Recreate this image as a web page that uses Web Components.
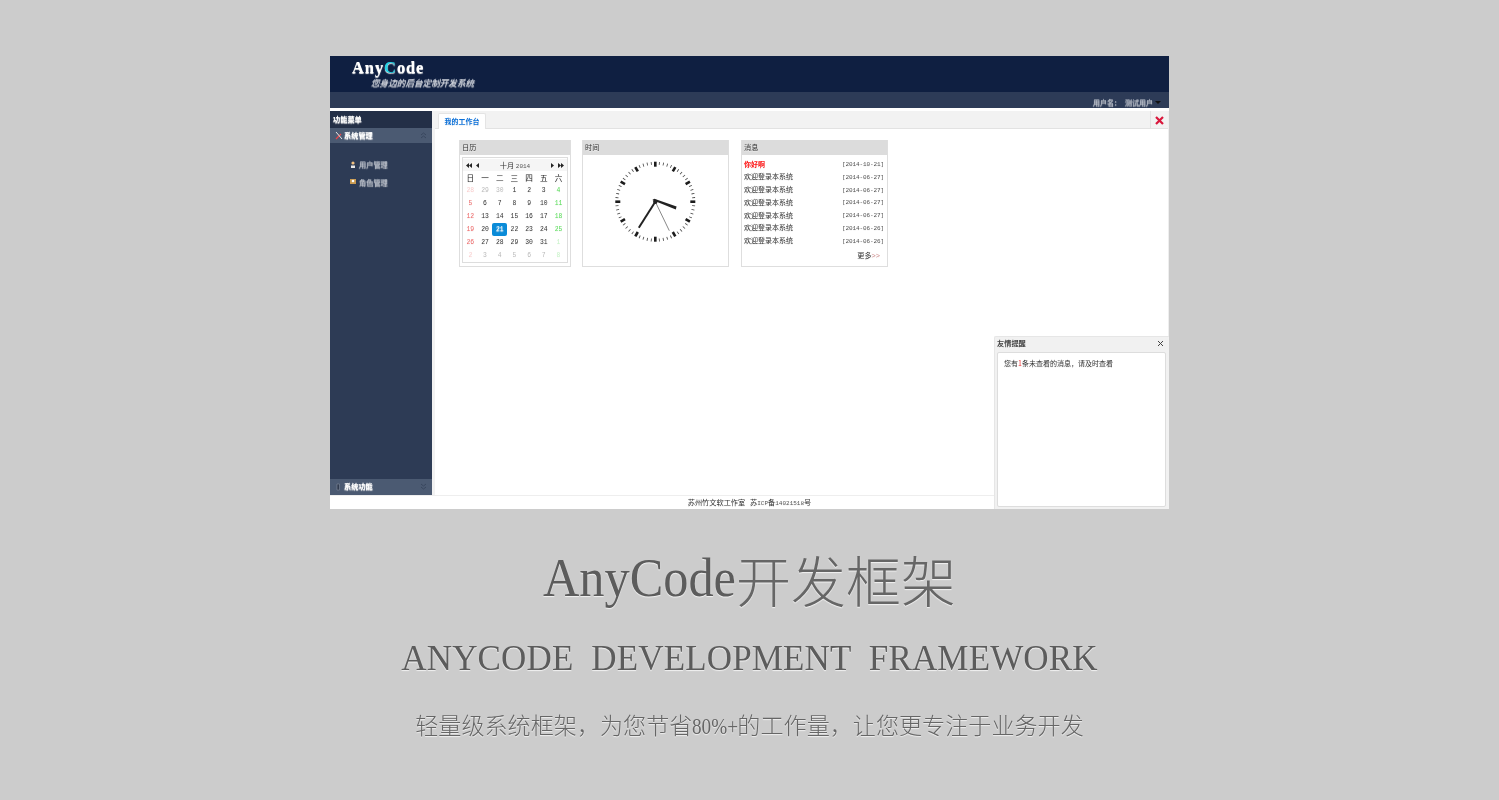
<!DOCTYPE html>
<html lang="zh"><head><meta charset="utf-8"><title>AnyCode</title>
<style>html,body{margin:0;background:#ccc;font-family:"Liberation Sans","Noto Sans CJK SC",sans-serif}</style></head>
<body><ac-page></ac-page>
<script>
const CJK='"Noto Sans CJK SC"';
function def(name,css,html,init){customElements.define(name,class extends HTMLElement{constructor(){super();const r=this.attachShadow({mode:'open'});r.innerHTML='<style>'+css+'</style>'+(typeof html==='function'?html(this):html);}connectedCallback(){if(init)init(this);}});}

def('ac-header',`:host{display:block;flex:none}
.top{height:36px;background:#0f1f41;position:relative;display:flex;flex-direction:column;padding-left:22px;box-sizing:border-box}
.logo{font:bold 16.5px/16px "Liberation Serif",serif;letter-spacing:.9px;color:#fff;margin-top:4px}
.logo b{color:#25d3e6}
.sub{font:italic 8.6px/10px ${CJK},sans-serif;color:#c9ced8;margin:1px 0 0 19px}
.bar{height:16px;background:#2d3b57;display:flex;justify-content:flex-end;align-items:center;gap:4px;padding:5px 8px 0 0;font:7px/11px ${CJK},sans-serif;color:#aeb5c2;box-sizing:border-box}
.bar i{width:0;height:0;border:3px solid transparent;border-top:3px solid #111;border-bottom:0;margin-left:-2px}
.line{height:3px;background:#fff}`,
`<div class="top"><div class="logo">Any<b>C</b>ode</div><div class="sub">您身边的后台定制开发系统</div></div>
<div class="bar"><span>用户名：</span><span>测试用户</span><i></i></div><div class="line"></div>`);

def('ac-menu-head',`:host{display:flex;align-items:center;height:16px;background:#4b5a72;color:#fff;font:bold 7.2px/14px ${CJK},sans-serif;padding:0 5px 2px 5px;gap:1px;flex:none;box-sizing:border-box}
:host([open]){height:15px;padding-bottom:1px}
svg{width:8px;height:9px;flex:none}span{flex:1}.c{width:7px;height:7px;flex:none;opacity:.4}`,
h=>`<svg viewBox="0 0 8 9">${h.getAttribute('open')!==null?'<path d="M1 8 6 3" stroke="#e8454a" stroke-width="1.2"/><path d="M1 1l6 7" stroke="#e8e8e8"/>':'<path d="M2 2h2.5v6H2z" fill="#2f3a4e" stroke="#8c95a5" stroke-width=".5"/>'}</svg><span><slot></slot></span>
<svg class="c" viewBox="0 0 7 7"><path d="${h.getAttribute('open')!==null?'M1 3 3.5 1 6 3M1 6 3.5 4 6 6':'M1 1 3.5 3 6 1M1 4 3.5 6 6 4'}" stroke="#1f2a40" fill="none"/></svg>`);

def('ac-sidebar',`:host{width:102px;flex:none;background:#2d3b55;display:flex;flex-direction:column}
.t{height:17px;background:#232f47;color:#fff;font:bold 7.2px/16px ${CJK},sans-serif;padding-left:3px;flex:none}
.list{flex:1;padding:14px 0 0 20px;display:flex;flex-direction:column;gap:3px}
.i{height:14.5px;display:flex;align-items:center;gap:3px;color:#a9b0bd;font:7.2px/14px ${CJK},sans-serif}
.i svg{width:6px;height:7px}`,
`<div class="t">功能菜单</div><ac-menu-head open>系统管理</ac-menu-head>
<div class="list"><div class="i"><svg viewBox="0 0 6 7"><circle cx="3" cy="2" r="1.6" fill="#f0c080"/><path d="M1 7V4.5h4V7z" fill="#e8e8e8"/></svg>用户管理</div>
<div class="i"><svg viewBox="0 0 6 7"><rect y="1" width="6" height="5" fill="#c99a50"/><circle cx="3" cy="3" r="1.3" fill="#fff"/></svg>角色管理</div></div>
<ac-menu-head>系统功能</ac-menu-head>`);

def('ac-panel',`:host{display:flex;flex-direction:column;flex:none;width:145px;height:126px;border:1px solid #dedede;border-top:0;background:#fff}
.h{height:15px;background:#dcdcdc;font:7.2px/15px ${CJK},sans-serif;color:#333;padding-left:2px;flex:none}
.b{flex:1;min-height:0}`,
h=>`<div class="h">${h.getAttribute('title')}</div><div class="b"><slot></slot></div>`);

def('ac-calendar',`:host{display:block;margin:2px 2px 0;border:1px solid #ddd;height:106px;box-sizing:border-box;padding:1px 0 1px 0}
.tb{display:flex;align-items:center;height:12px;background:#f5f5f5;font:7.2px/12px ${CJK},sans-serif;color:#333;padding:0 3px;gap:4px}
.tb svg{height:5px;flex:none}.m{flex:1;text-align:center}.m small{font:6px "Liberation Mono",monospace;color:#555}
.g{display:grid;grid-template-columns:repeat(7,14.7px);grid-auto-rows:13px;font:6.4px/13px "Liberation Mono",monospace;text-align:center;color:#333}
.w{font:7.6px/13px ${CJK},sans-serif;color:#222}
.s{color:#e66}.a{color:#5d5}.d{opacity:.35}.sel{background:#0a8bd8;color:#fff;border-radius:2px}`,
()=>{const w='日一二三四五六'.split('').map(x=>`<div class="w">${x}</div>`).join('');
const ds=[28,29,30,1,2,3,4,5,6,7,8,9,10,11,12,13,14,15,16,17,18,19,20,21,22,23,24,25,26,27,28,29,30,31,1,2,3,4,5,6,7,8];
const c=ds.map((d,i)=>{const col=i%7;let k=col==0?'s':col==6?'a':'';if(i<3||i>33)k+=' d';if(i==23)k+=' sel';return `<div class="${k}">${d}</div>`}).join('');
const L='<svg width="3" viewBox="0 0 3 5"><path d="M3 0v5L0 2.5z" fill="#222"/></svg>',R='<svg width="3" viewBox="0 0 3 5"><path d="M0 0v5l3-2.5z" fill="#222"/></svg>',LL='<svg width="6" viewBox="0 0 6 5"><path d="M3 0v5L0 2.5zM6 0v5L3 2.5z" fill="#222"/></svg>',RR='<svg width="6" viewBox="0 0 6 5"><path d="M0 0v5l3-2.5zM3 0v5l3-2.5z" fill="#222"/></svg>';
return `<div class="tb">${LL}${L}<span class="m">十月 <small>2014</small></span>${R}${RR}</div><div class="g">${w}${c}</div>`});

def('ac-clock',`:host{display:block}svg{display:block;width:145px;height:111px}`,
()=>{let t='';for(let i=0;i<60;i++){const a=i*6,h=i%5==0;t+=`<rect x="${h?-1.3:-.4}" y="-40" width="${h?2.6:.8}" height="${h?5:3}" fill="${h?'#1c1c1c':'#444'}" transform="rotate(${a})"/>`}
return `<svg viewBox="0 0 145 111"><g transform="translate(72.3 46.7)">${t}
<path d="M-3 -1.8-1-3 21.3 4.8 20.5 7.8Z" fill="#222"/>
<path d="M0 0-16.5 26" stroke="#222" stroke-width="2"/>
<path d="M0 0 14 29" stroke="#555" stroke-width=".7"/><circle r="2.2" fill="#222"/></g></svg>`});

def('ac-messages',`:host{display:block;padding:2.5px 3px 0 2px}
.r{display:flex;justify-content:space-between;align-items:center;height:12.8px;font:7px/12.8px ${CJK},sans-serif;color:#333}
.r span{font:6px/12.8px "Liberation Mono",monospace;color:#555;letter-spacing:-.1px;padding-top:3px}.hot{color:#f11;font-weight:bold}
.m{text-align:right;font:7.2px/13px ${CJK},sans-serif;color:#333;padding:2px 4px 0 0}.m i{font-style:normal;color:#c88;font-family:"Liberation Sans"}`,
()=>{const d=['10-21','06-27','06-27','06-27','06-27','06-26','06-26'];
return d.map((x,i)=>`<div class="r"><b class="${i?'':'hot'}" style="${i?'font-weight:normal':''}">${i?'欢迎登录本系统':'你好啊'}</b><span>[2014-${x}]</span></div>`).join('')+'<div class="m">更多<i>&gt;&gt;</i></div>'});

def('ac-main',`:host{flex:1;min-width:0;display:flex;flex-direction:column;background:#fff;margin-left:3px;box-shadow:-3px 0 0 #f2f2f2;border-right:1px solid #eee}
.tabs{height:18px;flex:none;background:#f2f2f2;border-bottom:1px solid #e2e2e2;display:flex;padding-left:3px;box-sizing:border-box;padding-top:2px}
.tab{width:48px;height:16px;background:#fff;border:1px solid #e4e4e4;border-bottom:0;box-sizing:border-box;border-radius:2px 2px 0 0;color:#0a6fd8;font:bold 7px/15px ${CJK},sans-serif;text-align:center}
.sp{flex:1}.x{width:18px;height:18px;margin-top:-2px;box-sizing:border-box;border-left:1px solid #e2e2e2;display:flex;align-items:center;justify-content:center}
.x svg{width:9px;height:9px}
.c{flex:1;display:flex;align-items:flex-start;gap:11px;padding:11px 0 0 24px}`,
`<div class="tabs"><div class="tab">我的工作台</div><div class="sp"></div><div class="x"><svg viewBox="0 0 9 9"><path d="M1 1l7 7M8 1 1 8" stroke="#d9173c" stroke-width="2.2"/></svg></div></div>
<div class="c"><ac-panel title="日历" style="width:110px"><ac-calendar></ac-calendar></ac-panel><ac-panel title="时间"><ac-clock></ac-clock></ac-panel><ac-panel title="消息" style="margin-left:1px"><ac-messages></ac-messages></ac-panel></div>`);

def('ac-popup',`:host{position:absolute;right:0;bottom:0;width:175px;height:173px;background:#f1f1f1;border:1px solid #e6e6e6;border-right:0;border-bottom:0;box-sizing:border-box;display:flex;flex-direction:column;padding:0 3px 2px 2px;border-radius:2px 0 0 0}
.h{height:15px;display:flex;justify-content:space-between;align-items:center;font:bold 7.2px/13px ${CJK},sans-serif;color:#444;flex:none;padding-bottom:2px;box-sizing:border-box}
.h svg{width:5px;height:5px;margin:0 3px 0 0}
.b{flex:1;background:#fff;border:1px solid #ddd;border-radius:2px;font:7px/10px ${CJK},sans-serif;color:#333;padding:5px 6px}.b i{color:#e33;font-style:normal}`,
`<div class="h"><span>友情提醒</span><svg viewBox="0 0 5 5"><path d="M0 0l5 5M5 0 0 5" stroke="#444"/></svg></div><div class="b">您有<i>1</i>条未查看的消息，请及时查看</div>`);

def('ac-app',`:host{display:flex;flex-direction:column;width:839px;height:453px;position:relative;background:#fff;flex:none;filter:blur(.3px);overflow:hidden}
.m{flex:1;min-height:0;display:flex}
.f{height:14px;flex:none;background:#fff;border-top:1px solid #eee;box-sizing:border-box;text-align:center;font:7.2px/13px ${CJK},sans-serif;color:#333}
.f small{font:6px "Liberation Mono",monospace;color:#555}`,
`<ac-header></ac-header><div class="m"><ac-sidebar></ac-sidebar><ac-main></ac-main></div><div class="f">苏州竹文软工作室&nbsp;&nbsp;&nbsp;苏<small>ICP</small>备<small>14021518</small>号</div><ac-popup></ac-popup>`);

def('ac-page',`:host{display:flex;flex-direction:column;align-items:center;height:800px;padding-top:56px;box-sizing:border-box;overflow:hidden;color:#5c5c5c;text-shadow:0 1px 1px #f2f2f2}
h1,h2,p{margin:0;font-weight:normal;white-space:nowrap;text-align:center;filter:blur(.2px)}
h1{font:55px/70px "Liberation Serif",${CJK},serif;margin-top:34px;display:flex;align-items:center}
h1 .l{display:inline-block;width:193px;transform:scaleX(.915);transform-origin:0 50%;white-space:nowrap}
h1 .z{font-family:${CJK},sans-serif;font-weight:200;color:#666}
h2{font:35px/36px "Liberation Serif",serif;margin-top:28px;word-spacing:9px;letter-spacing:.15px}
p{font:200 23.1px/30px "Liberation Serif",${CJK},serif;margin-top:34px;color:#666;display:flex;justify-content:center}
p .n{display:inline-block;width:45px;transform:scaleX(.83);transform-origin:0 50%;text-align:left}`,
`<ac-app></ac-app><h1><span class="l">AnyCode</span><span class="z">开发框架</span></h1><h2>ANYCODE DEVELOPMENT FRAMEWORK</h2><p><span>轻量级系统框架，为您节省</span><span class="n">80%+</span><span>的工作量，让您更专注于业务开发</span></p>`);
</script></body></html>
